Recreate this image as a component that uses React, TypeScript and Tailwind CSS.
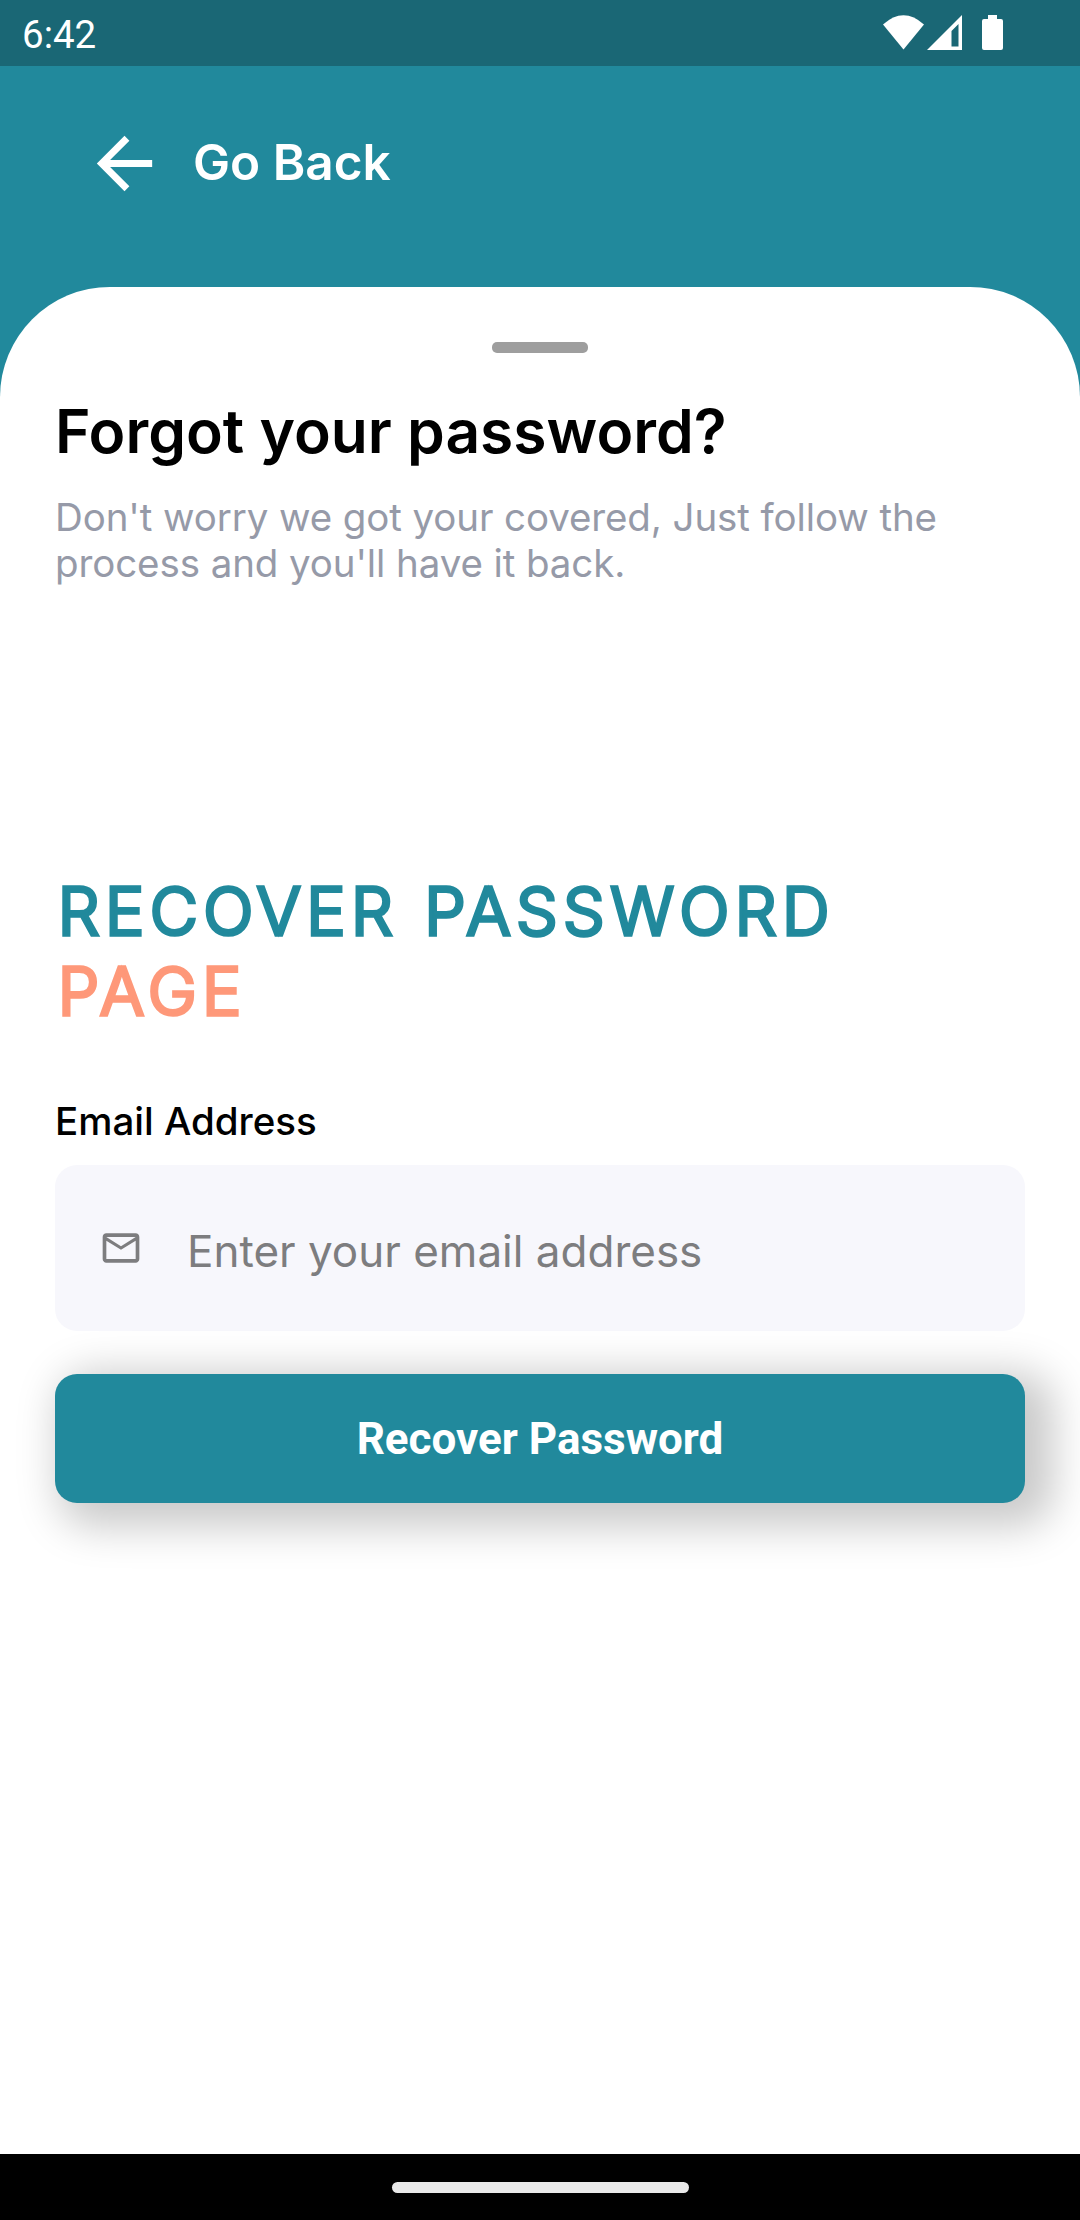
function StatusIcons() {
  return (
    <svg width="121" height="36" viewBox="883 15 121 36" fill="currentColor">
      <path d="M883 24.500Q903.500 6 924 24.500L903.500 49.500Z" />
      <path fillRule="evenodd" d="M962 15V50H927ZM958.500 24L951.500 31V46.500H958.500Z" />
      <path d="M988 15h9v4h4q2 0 2 2v27q0 2-2 2h-17q-2 0-2-2V21q0-2 2-2h4z" />
    </svg>
  );
}

function BackArrow() {
  return (
    <svg width="83" height="83" viewBox="0 0 24 24" fill="currentColor">
      <path d="M20 11H7.83l5.59-5.59L12 4l-8 8 8 8 1.41-1.41L7.83 13H20z" />
    </svg>
  );
}

function MailIcon() {
  return (
    <svg width="44" height="44" viewBox="0 0 24 24" fill="currentColor">
      <path d="M22 6c0-1.100-.9-2-2-2H4c-1.100 0-2 .9-2 2v12c0 1.100.9 2 2 2h16c1.100 0 2-.9 2-2V6zm-2 0l-8 5-8-5h16zm0 12H4V8l8 5 8-5v10z" />
    </svg>
  );
}

export default function App() {
  return (
    <div className="w-[1080px] h-[2220px] flex flex-col overflow-hidden bg-[#21899c] font-['Inter',sans-serif]">
      <header className="h-[66px] shrink-0 bg-[#1a6775] flex items-center justify-between pl-[22px] pr-[76px] text-white">
        <span className="font-['Roboto',sans-serif] text-[38.5px] leading-[66px] pt-[3px]">6:42</span>
        <StatusIcons />
      </header>
      <nav className="h-[221px] shrink-0 flex items-start pt-[56px] pl-[82.5px] text-white">
        <BackArrow />
        <span className="ml-[27.5px] pt-[10px] text-[49.5px] leading-[60px] font-semibold">Go Back</span>
      </nav>
      <main className="grow bg-white rounded-t-[110px] px-[55px] flex flex-col">
        <div className="mt-[55px] shrink-0 self-center w-[96px] h-[11px] rounded-[5px] bg-[#9e9e9e]" />
        <h1 className="mt-[41px] text-[60.5px] leading-[75px] font-semibold text-black">Forgot your password?</h1>
        <p className="mt-[25px] text-[38.5px] leading-[46px] tracking-[-0.1px] text-[#969aa8]">
          Don't worry we got your covered, Just follow the
          <br />
          process and you'll have it back.
        </p>
        <h2 className="mt-[285px] pl-[2.75px] text-[66px] leading-[80px] tracking-[5.4px] [word-spacing:2px] font-light text-[#21899c] [-webkit-text-stroke:3.6px_currentColor]">
          RECOVER PASSWORD
          <br />
          <span className="text-[#fe9879]">PAGE</span>
        </h2>
        <label htmlFor="email" className="mt-[67px] text-[38.5px] leading-[46px] font-medium text-black">
          Email Address
        </label>
        <div className="mt-[21px] h-[166px] shrink-0 rounded-[22px] bg-[#f7f7fc] flex items-center pl-[44px] text-[#7d7d7f]">
          <MailIcon />
          <input
            id="email"
            placeholder="Enter your email address"
            className="ml-[44px] mt-[6px] grow bg-transparent text-[44px] leading-[54px] outline-none placeholder:text-[#7d7d7f] placeholder:opacity-100"
          />
        </div>
        <button className="mt-[43px] h-[129px] shrink-0 rounded-[22px] bg-[#21899c] text-white font-['Roboto',sans-serif] text-[44px] font-bold shadow-[16px_11px_42px_13px_rgba(0,0,0,0.21)]">
          Recover Password
        </button>
      </main>
      <footer className="h-[66px] shrink-0 bg-black flex items-center justify-center">
        <div className="w-[297px] h-[11px] rounded-full bg-[#e9e9e9]" />
      </footer>
    </div>
  );
}
